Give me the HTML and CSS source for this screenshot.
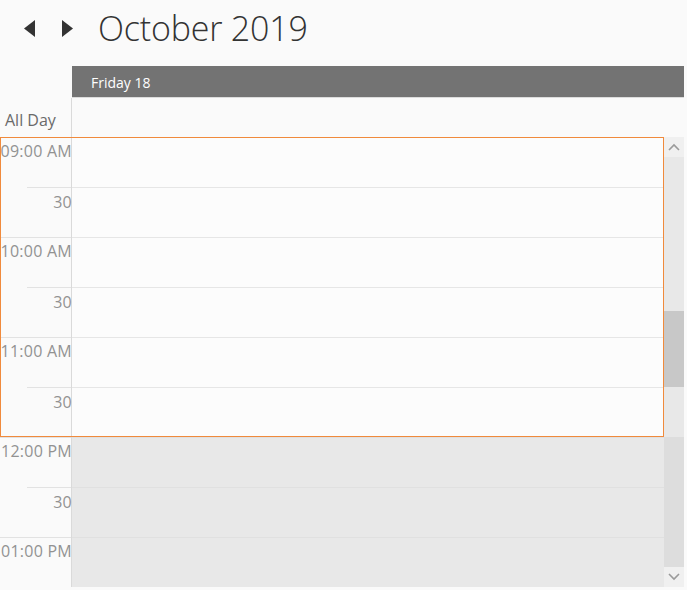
FILE: index.html
```html
<!DOCTYPE html>
<html>
<head>
<meta charset="utf-8">
<link rel="stylesheet" href="styles.css">
</head>
<body>
<div class="header">
  <div class="nav">
    <svg class="arrow" width="13" height="17" viewBox="0 0 13 17"><polygon points="12,0 12,17 1,8.5" fill="#333"/></svg>
    <svg class="arrow" width="13" height="17" viewBox="0 0 13 17"><polygon points="1,0 1,17 12,8.5" fill="#333"/></svg>
  </div>
  <div class="title">October 2019</div>
</div>
<div class="dayrow">
  <div class="corner"></div>
  <div class="daybar">Friday 18</div>
  <div class="edge"></div>
</div>
<div class="alldayrow">
  <div class="allday-label">All Day</div>
  <div class="allday-cell"></div>
</div>
<div class="scroller">
  <div class="timecol">
    <div class="tslot hour"><span>09:00 AM</span></div>
    <div class="tslot half"><span>30</span></div>
    <div class="tslot hour"><span>10:00 AM</span></div>
    <div class="tslot half"><span>30</span></div>
    <div class="tslot hour"><span>11:00 AM</span></div>
    <div class="tslot half"><span>30</span></div>
    <div class="tslot hour"><span>12:00 PM</span></div>
    <div class="tslot half"><span>30</span></div>
    <div class="tslot hour"><span>01:00 PM</span></div>
  </div>
  <div class="daycol">
    <div class="cell work"></div>
    <div class="cell work"></div>
    <div class="cell work"></div>
    <div class="cell work"></div>
    <div class="cell work"></div>
    <div class="cell work"></div>
    <div class="cell off"></div>
    <div class="cell off"></div>
    <div class="cell off"></div>
  </div>
  <div class="scrollbar">
    <div class="sbtn">
      <svg width="12" height="8" viewBox="0 0 12 8"><polyline points="1,7 6,2 11,7" fill="none" stroke="#9a9a9a" stroke-width="1.6"/></svg>
    </div>
    <div class="track"><div class="thumb"></div></div>
    <div class="sbtn">
      <svg width="12" height="8" viewBox="0 0 12 8"><polyline points="1,1 6,6 11,1" fill="none" stroke="#9a9a9a" stroke-width="1.6"/></svg>
    </div>
  </div>
  <div class="edge"></div>
  <div class="selection"></div>
</div>
</body>
</html>
```
FILE: styles.css
```css
html, body {
  margin: 0;
  padding: 0;
  background: #fafafa;
  font-family: "Open Sans", "Noto Sans", sans-serif;
  width: 687px;
  height: 590px;
  overflow: hidden;
}
.header {
  height: 66px;
  display: flex;
  align-items: center;
  padding-left: 23px;
  box-sizing: border-box;
}
.nav {
  display: flex;
  gap: 25px;
  margin-top: -10px;
}
.arrow { display: block; }
.title {
  margin-left: 24px;
  margin-top: -10px;
  font-size: 34px;
  font-weight: 300;
  color: #333;
  letter-spacing: -0.2px;
}
.dayrow {
  display: flex;
  height: 32px;
}
.corner { width: 72px; }
.daybar {
  width: 612px;
  background: #737373;
  color: #fff;
  font-size: 14px;
  line-height: 33px;
  padding-left: 19px;
  box-sizing: border-box;
  border-bottom: 1px solid #dcdcdc;
}
.edge { width: 3px; }
.alldayrow {
  display: flex;
  height: 39px;
}
.allday-label {
  width: 72px;
  border-right: 1px solid #dadada;
  box-sizing: border-box;
  font-size: 16px;
  color: #6a6a6a;
  padding-left: 5px;
  padding-top: 11px;
}
.allday-cell { width: 592px; }
.scroller {
  position: relative;
  display: flex;
  height: 450px;
  overflow: hidden;
}
.timecol {
  width: 72px;
  border-right: 1px solid #dadada;
  box-sizing: border-box;
  flex: none;
}
.tslot {
  position: relative;
  height: 50px;
  text-align: right;
  font-size: 16px;
  letter-spacing: 0.25px;
  color: #929292;
  line-height: 20px;
  padding-top: 4px;
  box-sizing: border-box;
  white-space: nowrap;
}
.tslot span { margin-right: -1px; }
.tslot::before {
  content: "";
  position: absolute;
  top: 0;
  right: 0;
  height: 1px;
  background: #e2e2e2;
}
.tslot.hour::before { left: 0; }
.tslot.half::before { left: 27px; }
.tslot.half { padding-top: 5px; }
.daycol {
  width: 592px;
  flex: none;
}
.cell {
  height: 50px;
  border-top: 1px solid #e6e6e6;
  box-sizing: border-box;
}
.cell.work { background: #fcfcfc; }
.cell.off { background: #e8e8e8; border-top-color: #e0e0e0; }
.scrollbar {
  width: 20px;
  flex: none;
  display: flex;
  flex-direction: column;
  background: #e8e8e8;
}
.sbtn {
  height: 20px;
  background: #f0f0f0;
  display: flex;
  align-items: center;
  justify-content: center;
}
.track {
  flex: 1;
  background: linear-gradient(#e8e8e8 0, #e8e8e8 280px, #dddddd 280px);
}
.thumb {
  margin-top: 154px;
  height: 76px;
  background: #c8c8c8;
}
.selection {
  position: absolute;
  left: 0;
  top: 0;
  width: 664px;
  height: 300px;
  border: 1px solid #f08a3c;
  box-sizing: border-box;
}
```
